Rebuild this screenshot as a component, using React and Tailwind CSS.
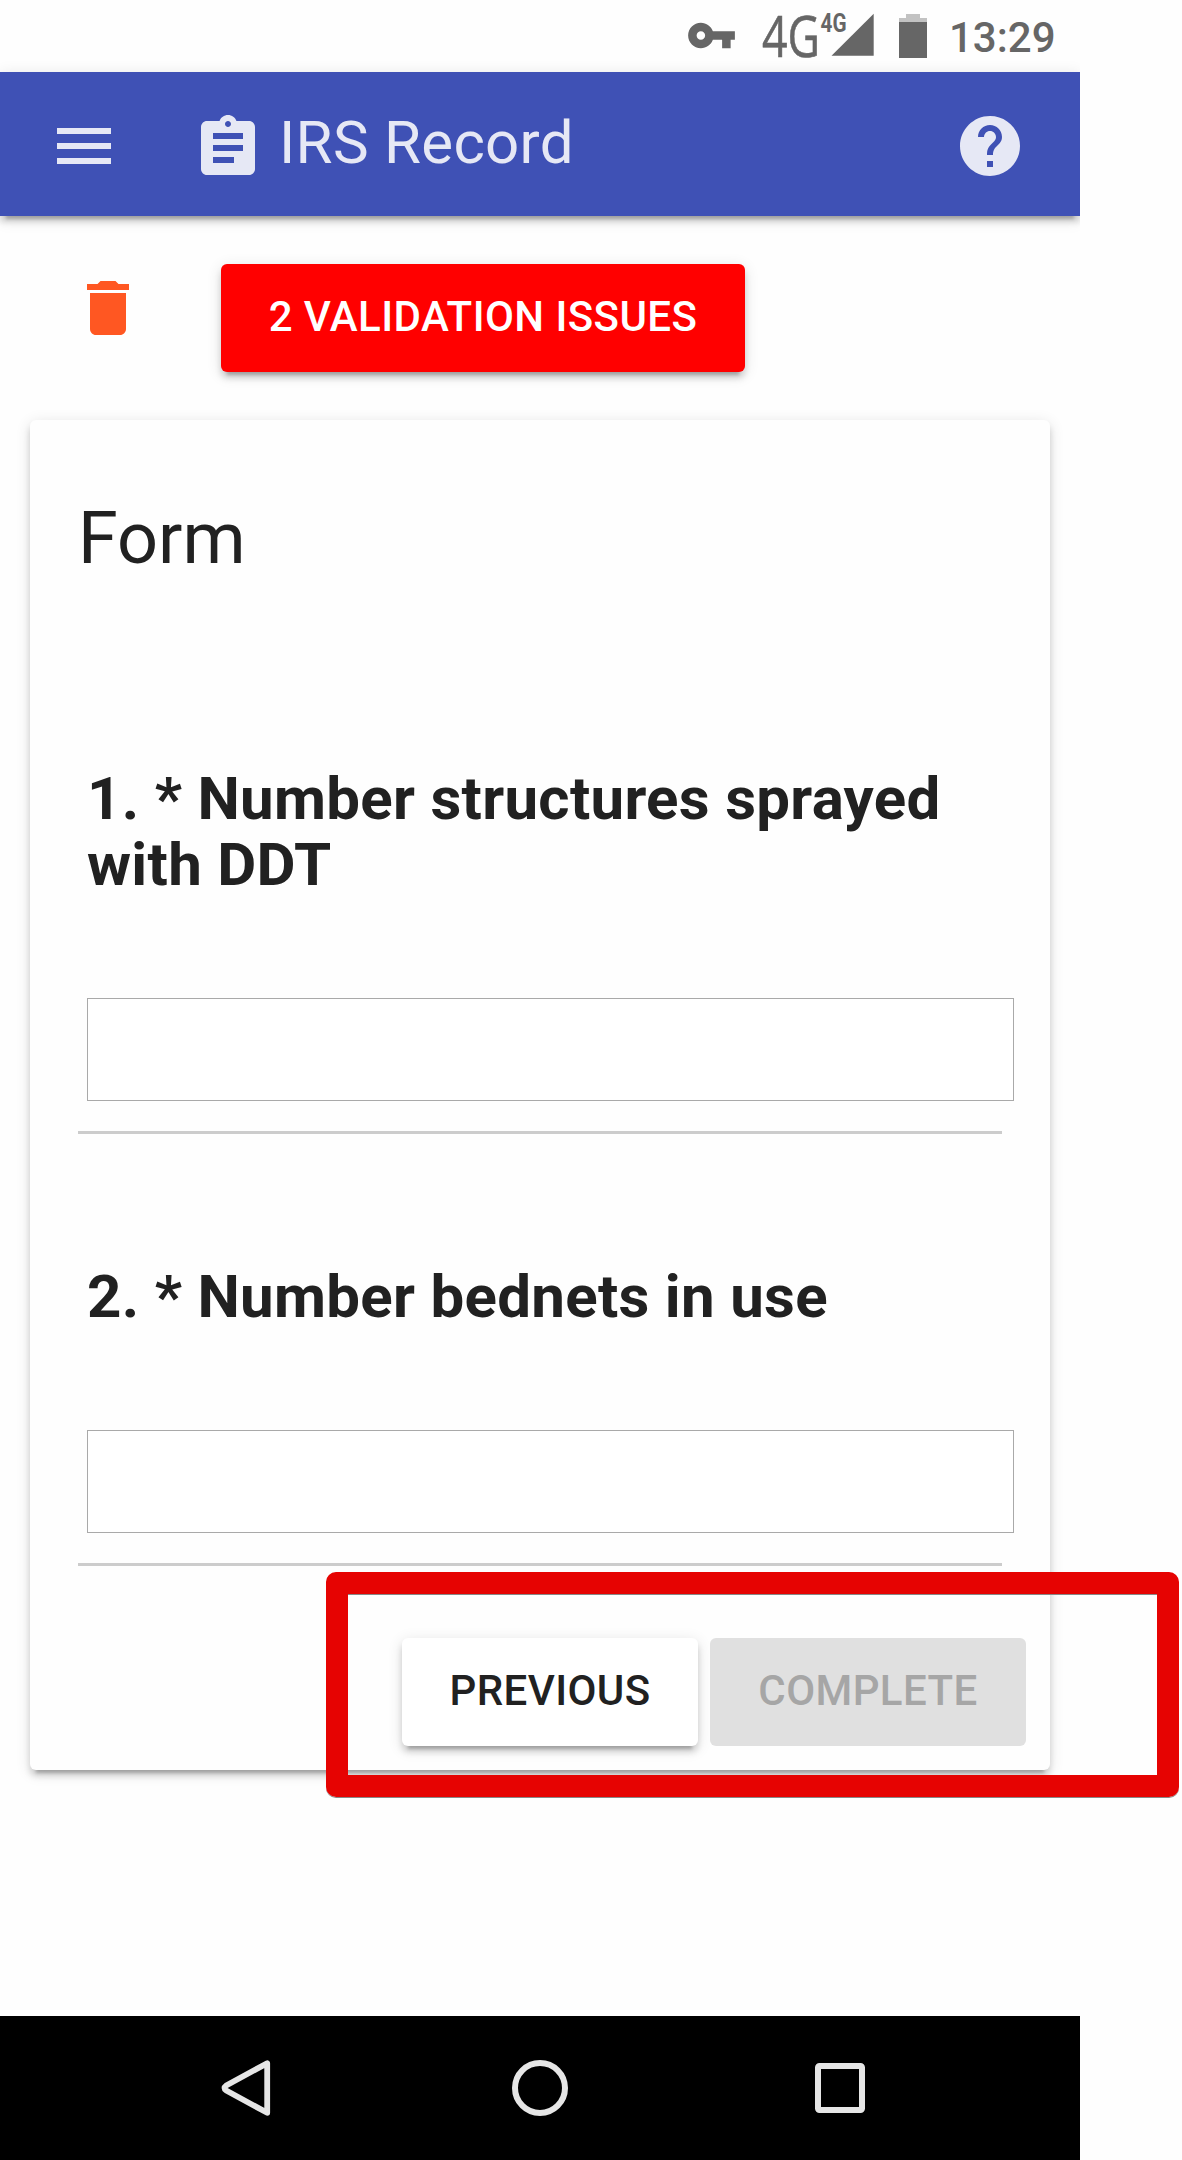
import React from "react";

const raised =
  "shadow-[0_9px_3px_-6px_rgba(0,0,0,0.2),0_6px_6px_0_rgba(0,0,0,0.14),0_3px_15px_0_rgba(0,0,0,0.12)]";

function Icon({ d, className }) {
  return (
    <svg viewBox="0 0 24 24" className={className} fill="currentColor">
      <path d={d} />
    </svg>
  );
}

const icons = {
  key: "M12.65 10C11.83 7.67 9.61 6 7 6c-3.31 0-6 2.69-6 6s2.69 6 6 6c2.61 0 4.83-1.67 5.65-4H17v4h4v-4h2v-4H12.65zM7 14c-1.1 0-2-.9-2-2s.9-2 2-2 2 .9 2 2-.9 2-2 2z",
  menu: "M3 18h18v-2H3v2zm0-5h18v-2H3v2zm0-7v2h18V6H3z",
  assignment:
    "M19 3h-4.18C14.4 1.84 13.3 1 12 1c-1.3 0-2.4.84-2.82 2H5c-1.1 0-2 .9-2 2v14c0 1.1.9 2 2 2h14c1.1 0 2-.9 2-2V5c0-1.1-.9-2-2-2zm-7 0c.55 0 1 .45 1 1s-.45 1-1 1-1-.45-1-1 .45-1 1-1zm2 14H7v-2h7v2zm3-4H7v-2h10v2zm0-4H7V7h10v2z",
  help: "M12 2C6.48 2 2 6.48 2 12s4.48 10 10 10 10-4.48 10-10S17.52 2 12 2zm1 17h-2v-2h2v2zm2.07-7.75l-.9.92C13.45 12.9 13 13.5 13 15h-2v-.5c0-1.1.45-2.1 1.17-2.83l1.24-1.26c.37-.36.59-.86.59-1.41 0-1.1-.9-2-2-2s-2 .9-2 2H8c0-2.21 1.79-4 4-4s4 1.79 4 4c0 .88-.36 1.68-.93 2.25z",
  trash:
    "M6 19c0 1.1.9 2 2 2h8c1.1 0 2-.9 2-2V7H6v12zM19 4h-3.5l-1-1h-5l-1 1H5v2h14V4z",
};

function StatusBar() {
  return (
    <div className="flex h-[72px] items-start pl-[686px] text-[#666]">
      <Icon d={icons.key} className="mt-[10px] size-[51px]" />
      <svg viewBox="0 0 112 72" className="ml-[25px] h-[72px] w-[112px] overflow-visible" fill="currentColor">
        <text x="0" y="57" fontFamily="Open Sans" fontSize="56" stroke="currentColor" strokeWidth="0.6" textLength="58" lengthAdjust="spacingAndGlyphs">4G</text>
        <text x="58.5" y="32.3" fontFamily="Roboto" fontWeight="700" fontSize="25" textLength="26" lengthAdjust="spacingAndGlyphs">4G</text>
        <path d="M69.5 55.7h42.2v-42z" />
      </svg>
      <svg viewBox="0 0 28 72" className="ml-[25px] h-[72px] w-[28px]" fill="currentColor">
        <path d="M7 14h14v4h7v4H0v-4h7z" fill="#c2c2c2" />
        <path d="M0 22h28v36H0z" />
      </svg>
      <span className="mt-[14px] ml-[22px] text-[42px] leading-[48px] font-medium">13:29</span>
    </div>
  );
}

function AppBar() {
  return (
    <header className={`flex h-36 items-start bg-[#3f51b5] pl-12 pr-[54px] text-[#e6e8f5] ${raised}`}>
      <Icon d={icons.menu} className="mt-[38px] size-[72px]" />
      <Icon d={icons.assignment} className="mt-10 ml-[72px] size-[72px]" />
      <h1 className="mt-9 ml-[15px] text-[60px] leading-[70px] tracking-[0.005em]">IRS Record</h1>
      <Icon d={icons.help} className="mt-[38px] ml-auto size-[72px]" />
    </header>
  );
}

function Question({ children }) {
  return (
    <section className="ml-12">
      <h3 className="ml-[9px] text-[60px] leading-[66px] font-bold tracking-[0.005em]">{children}</h3>
      <input className="mt-[100px] ml-[9px] block h-[103px] w-[927px] border border-[#a9a9a9] bg-white" />
      <hr className="mt-[30px] h-[3px] w-[924px] border-0 bg-[#ccc]" />
    </section>
  );
}

function NavBar() {
  return (
    <nav className="mt-auto flex h-36 items-center bg-black pl-[218px] text-[#e6e6e6]">
      <svg viewBox="0 0 56 56" className="size-14" fill="none" stroke="currentColor" strokeWidth="5.8" strokeLinejoin="round">
        <path d="M49.2 3.2v49.6L8.2 30.5q-3.4-2.5 0-5z" />
      </svg>
      <svg viewBox="0 0 56 56" className="ml-[238px] size-14" fill="none" stroke="currentColor" strokeWidth="6">
        <circle cx="28" cy="28" r="25" />
      </svg>
      <svg viewBox="0 0 50 50" className="ml-[247px] size-[50px]" fill="none" stroke="currentColor" strokeWidth="6">
        <rect x="3" y="3" width="44" height="44" rx="1.5" />
      </svg>
    </nav>
  );
}

export default function App() {
  return (
    <div className="relative h-[2160px] w-[1182px] overflow-hidden bg-[#fefefe] font-[Roboto,sans-serif] text-[#212121]">
      <div className="flex h-full w-[1080px] flex-col overflow-hidden">
        <StatusBar />
        <AppBar />
        <div className="mt-12 flex items-start pl-[72px]">
          <Icon d={icons.trash} className="mt-2 size-[72px] text-[#ff5722]" />
          <button className={`ml-[77px] h-[108px] w-[524px] rounded-[6px] bg-[#f00] pb-1 text-[42px] font-medium tracking-[0.01em] whitespace-nowrap text-white ${raised}`}>
            2 VALIDATION ISSUES
          </button>
        </div>
        <main className={`mx-[30px] mt-12 h-[1350px] rounded-[6px] bg-[#fefefe] ${raised}`}>
          <h2 className="pt-[77px] pl-12 text-[72px] leading-[84px]">Form</h2>
          <div className="mt-[185px]">
            <Question>
              1. * Number structures sprayed
              <br />
              with DDT
            </Question>
          </div>
          <div className="mt-[130px]">
            <Question>2. * Number bednets in use</Question>
          </div>
          <div className="mt-[72px] flex justify-end gap-3 pr-6">
            <button className={`h-[108px] w-[296px] rounded-[6px] bg-white pb-1 text-[42px] font-medium tracking-[0.01em] ${raised}`}>
              PREVIOUS
            </button>
            <button disabled className="h-[108px] w-[316px] rounded-[6px] bg-[#e0e0e0] pb-1 text-[42px] font-medium tracking-[0.01em] text-[#a6a6a6]">
              COMPLETE
            </button>
          </div>
        </main>
        <NavBar />
      </div>
      <div className="pointer-events-none absolute top-[1572px] left-[326px] h-[225px] w-[853px] rounded-[10px] border-[22px] border-[#e60302] shadow-[0_1px_0_#888,inset_0_1px_0_#888]" />
    </div>
  );
}
